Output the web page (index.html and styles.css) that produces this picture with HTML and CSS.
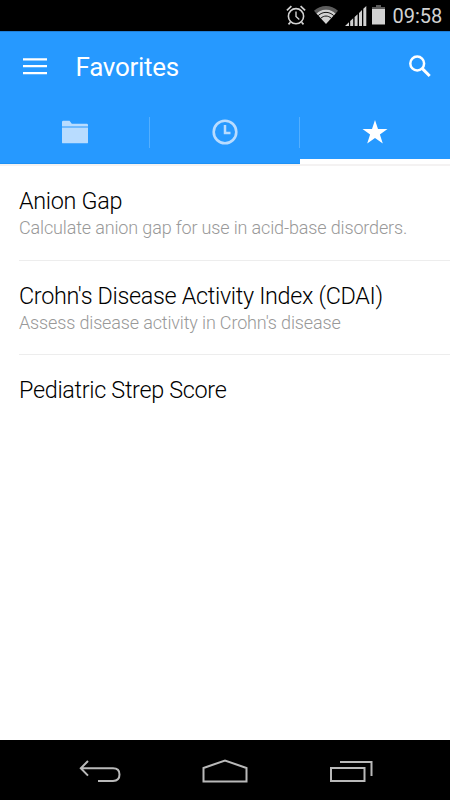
FILE: index.html
```html
<!DOCTYPE html>
<html lang="en">
<head>
<meta charset="utf-8">
<title>Favorites</title>
<link rel="stylesheet" href="styles.css">
</head>
<body>
<div class="status">
  <svg class="alarm" width="20" height="22" viewBox="0 0 20 22" fill="none" stroke="#d2d2d2"><circle cx="10" cy="12.2" r="7.6" stroke-width="1.6"/><path d="M10 7.5v5l3.3 3" stroke-width="1.4"/><path d="M.9 6.4 5.4 2.2M14.6 2.2l4.5 4.2M4.4 18.3 2.5 20.4M15.6 18.3l1.9 2.1" stroke-width="1.7"/></svg>
  <svg class="wifi" width="24" height="18" viewBox="0 0 24 18"><path d="M0 4.8C6.5-1.5 17.5-1.5 24 4.8L21.6 7.4C16 2.2 8 2.2 2.4 7.4Z" fill="#5c5c5c"/><path d="M2.4 7.4C8 2.2 16 2.2 21.6 7.4L12 18Z" fill="#d2d2d2"/><path d="M4.2 9.6c4.6-4.3 11-4.3 15.6 0M6.7 12.3c3.2-3 7.4-3 10.6 0" fill="none" stroke="#000" stroke-width=".9"/></svg>
  <svg class="signal" width="22" height="20" viewBox="0 0 22 20" fill="#d2d2d2"><path d="M0 20 4 16.2V20ZM5.2 15 8.2 12.2V20h-3ZM9.6 11 12.6 8.2V20h-3ZM14 6.9 17 4.1V20h-3ZM18.3 2.8 21.3 0V20h-3Z"/></svg>
  <svg class="battery" width="13" height="20" viewBox="0 0 13 20"><path d="M4 0h5v2h4v2H0V2h4Z" fill="#5c5c5c"/><path d="M0 4h13v15.5H0Z" fill="#d2d2d2"/></svg>
  <span class="time">09:58</span>
</div>
<header class="header">
  <div class="bar">
    <svg width="24" height="18" viewBox="0 0 24 18" stroke="#fff" stroke-width="2.3"><path d="M0 1.3h24M0 8.2h24M0 15.2h24"/></svg>
    <h1>Favorites</h1>
    <svg width="24" height="24" viewBox="0 0 24 24" fill="none" stroke="#fff"><circle cx="9.2" cy="8.5" r="6.9" stroke-width="2.5"/><path d="m14.1 13.4 7.6 7.6" stroke-width="3"/></svg>
  </div>
  <nav class="tabs">
    <div class="tab"><svg width="26" height="24" viewBox="0 0 26 24" fill="#b8dcff"><path d="M0 2Q0 .7 1.3.7H7.5L9.8 3.8H24.8Q26 3.8 26 5V6.4H0ZM0 7.4H26V22.4Q26 23.3 25 23.3H1Q0 23.3 0 22.4Z"/></svg></div>
    <div class="tab"><svg width="26" height="26" viewBox="0 0 26 26" fill="none" stroke="#b8dcff"><circle cx="13" cy="13" r="11.3" stroke-width="2.6"/><path d="M13 6v8h5.5" stroke-width="2.5"/></svg></div>
    <div class="tab active"><svg width="26" height="24" viewBox="0 0 26 24" fill="#fff"><path d="m13 0 3 9h9.5l-7.6 5.6 2.9 9L13 18.1 5.2 23.6l2.9-9L.5 9H10Z"/></svg></div>
  </nav>
</header>
<main class="list">
  <div class="item"><h2>Anion Gap</h2><p>Calculate anion gap for use in acid-base disorders.</p></div>
  <div class="item"><h2>Crohn's Disease Activity Index (CDAI)</h2><p>Assess disease activity in Crohn's disease</p></div>
  <div class="item"><h2>Pediatric Strep Score</h2></div>
</main>
<footer class="nav">
  <svg width="42" height="24" viewBox="0 0 42 24" fill="none" stroke="#b9b9b9" stroke-width="2"><path d="M9 2 1.8 9.3 9 16.6M2 9.3H34Q40.5 9.3 40.5 15.5T34 22H19"/></svg>
  <svg width="46" height="24" viewBox="0 0 46 24" fill="none" stroke="#b9b9b9" stroke-width="2"><path d="M1.5 9 23 1.5 44.5 9V22.5h-43Z"/></svg>
  <svg width="44" height="24" viewBox="0 0 44 24" fill="none" stroke="#b9b9b9" stroke-width="2"><path d="M2 9H35.5V22H2ZM11 3H42.5V17"/></svg>
</footer>
</body>
</html>
```
FILE: styles.css
```css
* { box-sizing: border-box; }
body { margin: 0; width: 450px; height: 800px; display: flex; flex-direction: column; background: #fff; font-family: Roboto, sans-serif; overflow: hidden; }
svg { display: block; flex: none; }
h1, h2, p { margin: 0; white-space: nowrap; }
.status { height: 31px; flex: none; background: #000; color: #d2d2d2; display: flex; align-items: flex-start; padding: 4px 7px 0 286px; }
.wifi { margin: 2px 0 0 8px; }
.signal { margin: 2px 0 0 7px; }
.battery { margin: 1px 0 0 5px; }
.time { margin-left: 7.5px; font-size: 20px; line-height: 24px; }
.header { height: 133px; flex: none; background: #2699ff; border-top: 1px solid #1f7fd8; border-bottom: 1px solid #1d91f5; }
.bar { height: 70px; display: flex; align-items: center; padding: 0 18px 0 23px; }
.bar h1 { flex: 1; margin-left: 28.5px; color: #fff; font-size: 26px; font-weight: 400; line-height: 32px; letter-spacing: -.3px; }
.tabs { height: 62px; display: grid; grid-template-columns: repeat(3, 1fr); }
.tab { display: flex; justify-content: center; align-items: center; padding-bottom: 2px; background: linear-gradient(#53afff, #53afff) right 15px / 1px 31px no-repeat; }
.tab.active { background: none; box-shadow: inset 0 -5px #fff, 0 1px #fff; }
.list { flex: 1; padding-left: 19px; border-top: 2px solid #f4f2f2; }
.item { height: 94.5px; padding-top: 19px; border-bottom: 1px solid #ededed; }
.item:last-child { border: 0; }
.item h2 { font-size: 23.4px; font-weight: 300; line-height: 32px; letter-spacing: -.32px; color: #000; }
.item p { font-size: 18px; font-weight: 300; line-height: 22px; letter-spacing: -.15px; color: #999; }
.nav { height: 60px; flex: none; background: #000; display: flex; align-items: center; padding: 2px 77px 0 79px; justify-content: space-between; }
```
